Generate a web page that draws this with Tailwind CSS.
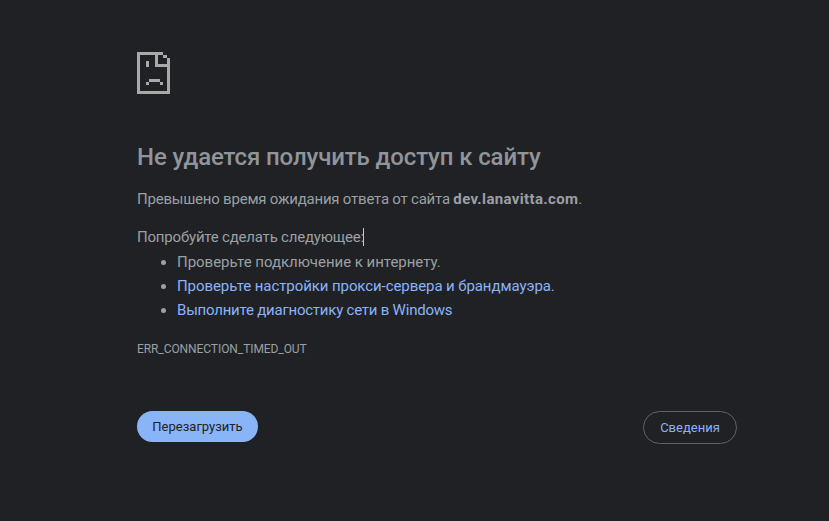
<!DOCTYPE html>
<html><head><meta charset="utf-8"><script src="https://cdn.jsdelivr.net/npm/@tailwindcss/browser@4"></script></head>
<body class="bg-[#202124] w-[829px] h-[521px] overflow-hidden font-['Roboto','Noto_Sans',sans-serif] text-[#9aa0a6]">
<div class="flex flex-col w-[600px] ml-[137px] pt-[52px] h-[521px]">
<svg width="33" height="42" viewBox="0 0 33 42" shape-rendering="crispEdges" class="block" fill="#a9a9a9">
<path d="M0 0H26V3H30V6H33V42H0V0ZM3 3V39H30V15H18V3ZM21 3V12H30V6H26V3Z" fill-rule="evenodd"/>
<path d="M9 9H12V15H9Z"/>
<path d="M12 27H23V30H26V33H23V30H12V33H9V30H12Z"/>
</svg>
<h1 class="mt-[47px] text-[24px] leading-[32px] font-medium text-[#8f959b] tracking-[-0.12px]">Не удается получить доступ к сайту</h1>
<p class="mt-[14px] text-[15px] leading-[24px] tracking-[-0.22px]">Превышено время ожидания ответа от сайта <b class="font-bold tracking-[0.35px]">dev.lanavitta.com</b>.</p>
<p class="mt-[14px] text-[15px] leading-[24px] relative w-fit tracking-[-0.2px]">Попробуйте сделать следующее:<span class="absolute right-0 top-[3px] w-px h-[18px] bg-[#c8c8c8]"></span></p>
<ul class="mt-[1px] pl-[40px] list-disc text-[15px] leading-[24px]">
<li class="tracking-[-0.03px]">Проверьте подключение к интернету.</li>
<li class="text-[#8ab4f8] marker:text-[#9aa0a6] tracking-[-0.08px]">Проверьте настройки прокси-сервера и брандмауэра.</li>
<li class="text-[#8ab4f8] marker:text-[#9aa0a6] tracking-[-0.22px]">Выполните диагностику сети в Windows</li>
</ul>
<div class="mt-[19px] text-[12px] leading-[16px] tracking-[-0.08px]">ERR_CONNECTION_TIMED_OUT</div>
<div class="mt-[54px] flex justify-between items-start font-['Roboto',sans-serif] text-[13px]">
<button class="h-[31px] w-[121px] rounded-full bg-[#8ab4f8] text-[#202124]">Перезагрузить</button>
<button class="h-[33px] w-[94px] rounded-full border border-[#5f6368] text-[#8ab4f8]">Сведения</button>
</div>
</div>
</body></html>
